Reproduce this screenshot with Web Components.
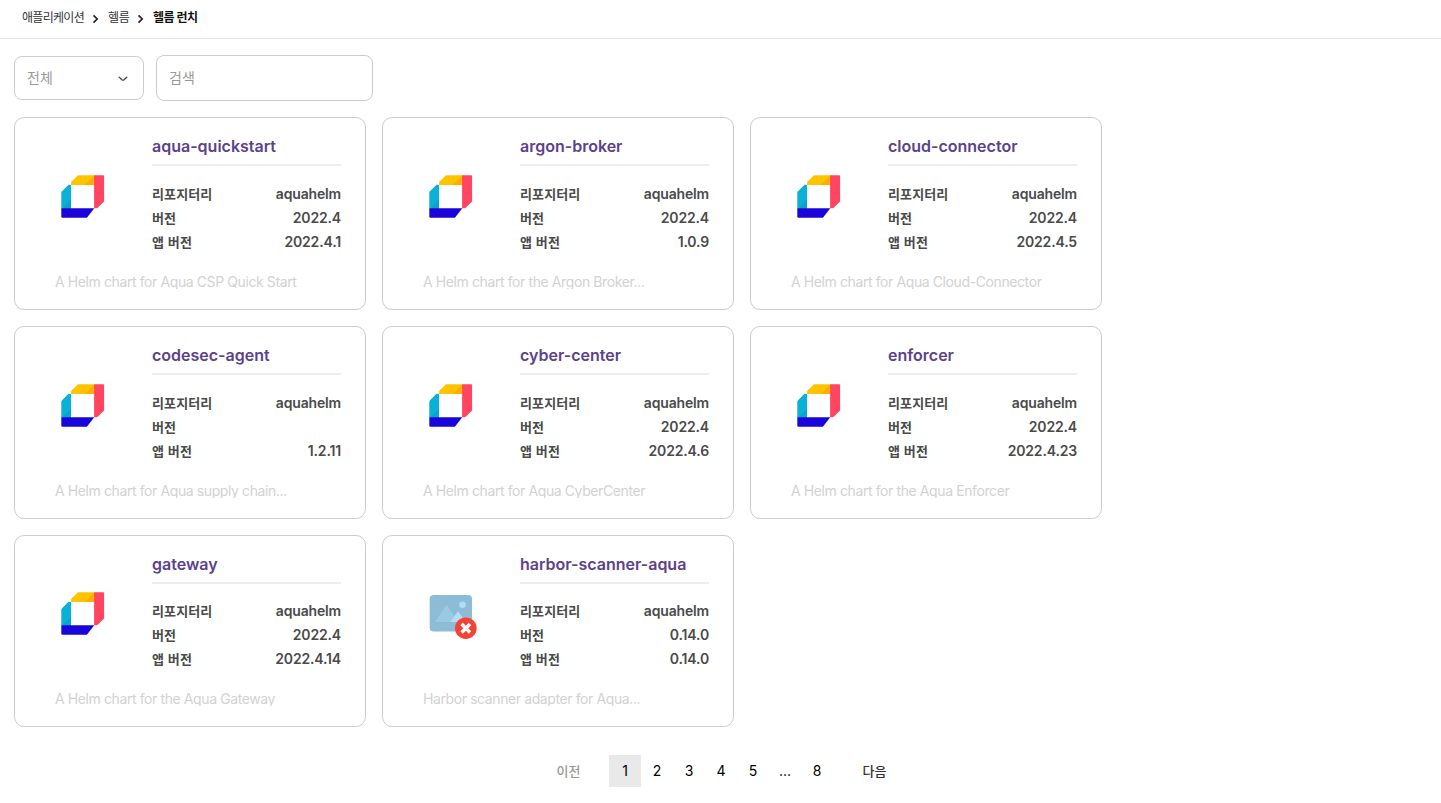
<!DOCTYPE html>
<html lang="ko"><head><meta charset="utf-8"><title>헬름 런치</title>
<style>
html,body{margin:0;background:#fff}
body{font-family:Inter,"Noto Sans CJK KR",sans-serif;height:803px;overflow:hidden}
</style></head><body>
<helm-page></helm-page>
<script>
const define=(name,html,init)=>customElements.define(name,class extends HTMLElement{
  connectedCallback(){
    if(this.shadowRoot)return;
    const t=document.createElement('template');t.innerHTML=html;
    this.attachShadow({mode:'open'}).append(t.content.cloneNode(true));
    if(init)init(this,this.shadowRoot);
  }
});

define('crumb-bar',`<style>
:host{display:flex;align-items:flex-start;box-sizing:border-box;height:39px;padding:9px 0 0 22px;border-bottom:1px solid #e2e2e2;font-size:12px;line-height:18px;letter-spacing:-.7px;color:#333;white-space:nowrap}
span{display:block}.a{width:62px}.b{width:21px;letter-spacing:-.4px}svg{margin:5px 9px 0 8px;flex:none}.b+svg{margin-left:8px}b{font-weight:700;color:#111;letter-spacing:-.5px}
</style><span class="a">애플리케이션</span>
<svg width="7" height="10" viewBox="0 0 7 10"><path d="M1.5 1.3 5.2 5 1.5 8.7" fill="none" stroke="#222" stroke-width="1.7"/></svg>
<span class="b">헬름</span>
<svg width="7" height="10" viewBox="0 0 7 10"><path d="M1.5 1.3 5.2 5 1.5 8.7" fill="none" stroke="#222" stroke-width="1.7"/></svg>
<b>헬름 런치</b>`);

define('filter-select',`<style>
:host{display:flex;align-items:center;justify-content:space-between;box-sizing:border-box;width:130px;height:44px;border:1px solid #ccc;border-radius:8px;padding:0 15px 0 12px;font-size:14px;color:#999}
span{padding-bottom:2px}svg{margin-top:1px}
</style><span><slot></slot></span><svg width="10" height="6" viewBox="0 0 10 6"><path d="M1.2 1.2 4.3 4q.7.6 1.4 0L8.8 1.2" fill="none" stroke="#444" stroke-width="1.3" stroke-linecap="round"/></svg>`);

define('search-field',`<style>
:host{display:flex;align-items:center;box-sizing:border-box;width:217px;height:46px;border:1px solid #ccc;border-radius:8px;padding:0 12px;font-size:14px;color:#999}
span{padding-bottom:2px}
</style><span><slot></slot></span>`);

define('aqua-logo',`<style>:host{display:block;width:44px;height:44px}svg{display:block}</style>
<svg width="44" height="44" viewBox="0.5 0.2 44 44">
<path d="M17.5.5H34v9.8H10.6V7.2z" fill="#ffc400"/><path d="M34 .5v9.8h-9.5z" fill="#ffad00"/>
<path d="M33.6.5h9q1 0 1 1v25.3l-7 6.7h-3z" fill="#ff4560"/>
<path d="M8 10h2.5v24H.8V18.2q0-1 .7-1.7z" fill="#08b1d5"/><path d="M10.5 25v9H1.5z" fill="#0ba3c8"/>
<path d="M.8 33.5h33L26.4 43H2q-1.2 0-1.2-1.2z" fill="#1904da"/></svg>`);

define('missing-image',`<style>:host{display:block;width:48px;height:44px;padding-top:3px}svg{display:block}</style>
<svg width="48" height="44" viewBox="0 0 48 44">
<rect x=".7" y="0" width="42.3" height="36.6" rx="4" fill="#8cbcd6"/>
<path d="M5.8 27 17.5 9.8 25.2 21 21 27z" fill="#9ac9e3"/><path d="M21 27l8-10.7L37 27z" fill="#b3ddf5"/>
<circle cx="33.5" cy="9.7" r="3.2" fill="#b3ddf5"/><circle cx="36.8" cy="33.2" r="10.8" fill="#f44336"/>
<path d="M32.6 29l8.4 8.4M41 29l-8.4 8.4" stroke="#fff" stroke-width="3.5"/></svg>`);

define('info-row',`<style>
:host{display:flex;justify-content:space-between;height:24px;line-height:24px;font-size:14px;font-weight:600;color:#4a4a4a;white-space:nowrap}
.k{font-size:13px;font-weight:700;font-family:"Noto Sans CJK KR",sans-serif;letter-spacing:.12px}
.val{letter-spacing:-.16px}
</style><span class="k"></span><span class="val"><slot></slot></span>`,(h,r)=>r.querySelector('.k').textContent=h.getAttribute('label'));

define('chart-card',`<style>
:host{display:flex;flex-direction:column;box-sizing:border-box;height:192.6px;border:1px solid #ccc;border-radius:10px;padding:16px 24px 0 40px}
.top{display:grid;grid-template-columns:97px 1fr;height:132.8px}
.pic{padding:40.8px 0 0 6px}
h2{margin:0;height:30px;border-bottom:2px solid #eee;font-size:16px;line-height:24px;font-weight:600;color:#5c428a;white-space:nowrap;margin-bottom:15.8px}
p{margin:6px 0 0;height:16px;line-height:18px;overflow:hidden;font-size:14px;letter-spacing:-.4px;color:#d2d2d2;white-space:nowrap}
</style><div class="top"><div class="pic"></div><div><h2></h2>
<info-row label="리포지터리">aquahelm</info-row><info-row class="v" label="버전"></info-row><info-row class="av" label="앱 버전"></info-row></div></div><p><slot></slot></p>`,(h,r)=>{
  r.querySelector('h2').textContent=h.getAttribute('name');
  r.querySelector('.v').textContent=h.getAttribute('version');
  r.querySelector('.av').textContent=h.getAttribute('app');
  r.querySelector('.pic').append(document.createElement(h.hasAttribute('missing')?'missing-image':'aqua-logo'));
});

define('page-nav',`<style>
:host{display:flex;justify-content:center;font-size:14px;line-height:32px;color:#000;text-align:center}
span{box-sizing:border-box;width:32px;height:32px;padding-left:1px}.on{background:#e9e9e9}.e{font-size:13px;font-weight:500;color:#333}
.prev{color:#999;text-align:left;width:53px}.next{text-align:right;width:53px;position:relative;left:1px}
</style><span class="e prev">이전</span><span class="on">1</span><span>2</span><span>3</span><span>4</span><span>5</span><span>...</span><span>8</span><span class="e next">다음</span>`);

define('helm-page',`<style>
:host{display:block}
.filters{display:flex;align-items:center;gap:12px;padding:16px 14px 0}
.grid{display:grid;grid-template-columns:repeat(3,352px);gap:16px;padding:16.4px 14px 0}
page-nav{margin-top:27.8px}
</style><crumb-bar></crumb-bar>
<div class="filters"><filter-select>전체</filter-select><search-field>검색</search-field></div>
<div class="grid">
<chart-card name="aqua-quickstart" version="2022.4" app="2022.4.1">A Helm chart for Aqua CSP Quick Start</chart-card>
<chart-card name="argon-broker" version="2022.4" app="1.0.9">A Helm chart for the Argon Broker...</chart-card>
<chart-card name="cloud-connector" version="2022.4" app="2022.4.5">A Helm chart for Aqua Cloud-Connector</chart-card>
<chart-card name="codesec-agent" version="" app="1.2.11">A Helm chart for Aqua supply chain...</chart-card>
<chart-card name="cyber-center" version="2022.4" app="2022.4.6">A Helm chart for Aqua CyberCenter</chart-card>
<chart-card name="enforcer" version="2022.4" app="2022.4.23">A Helm chart for the Aqua Enforcer</chart-card>
<chart-card name="gateway" version="2022.4" app="2022.4.14">A Helm chart for the Aqua Gateway</chart-card>
<chart-card missing name="harbor-scanner-aqua" version="0.14.0" app="0.14.0">Harbor scanner adapter for Aqua...</chart-card>
</div><page-nav></page-nav>`);
</script></body></html>
